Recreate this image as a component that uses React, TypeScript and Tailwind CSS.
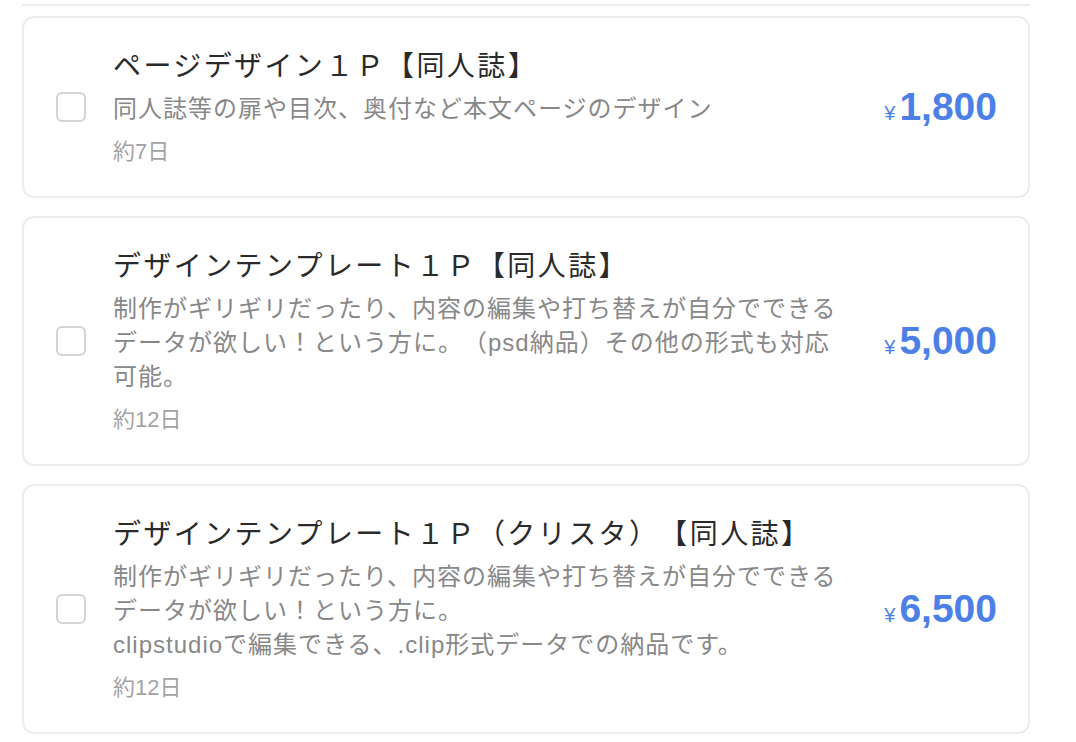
import React from 'react';

type Plan = {
  id: string;
  title: string;
  lines: string[];
  duration: string;
  price: string;
};

const plans: Plan[] = [
  {
    id: 'page',
    title: 'ページデザイン１Ｐ【同人誌】',
    lines: ['同人誌等の扉や目次、奥付など本文ページのデザイン'],
    duration: '約7日',
    price: '1,800',
  },
  {
    id: 'template',
    title: 'デザインテンプレート１Ｐ【同人誌】',
    lines: [
      '制作がギリギリだったり、内容の編集や打ち替えが自分でできる',
      'データが欲しい！という方に。（psd納品）その他の形式も対応',
      '可能。',
    ],
    duration: '約12日',
    price: '5,000',
  },
  {
    id: 'clip',
    title: 'デザインテンプレート１Ｐ（クリスタ）【同人誌】',
    lines: [
      '制作がギリギリだったり、内容の編集や打ち替えが自分でできる',
      'データが欲しい！という方に。',
      'clipstudioで編集できる、.clip形式データでの納品です。',
    ],
    duration: '約12日',
    price: '6,500',
  },
];

const PlanCard: React.FC<{ plan: Plan }> = ({ plan }) => (
  <label className="flex items-center rounded-[12px] border-2 border-[#ececec] bg-white pl-[32px] pr-[31px] py-[29px] cursor-pointer">
    <span className="flex-shrink-0 w-[30px] h-[30px] rounded-[6px] border-2 border-[#d4d4d6] bg-white" />
    <div className="ml-[27px] flex-grow">
      <p className="text-[28px] leading-[40px] tracking-[2.4px] text-[#2a2a2a]">{plan.title}</p>
      <div className="mt-[5px] text-[24px] leading-[34px] tracking-[1px] text-[#888888]">
        {plan.lines.map((line) => (
          <p key={line}>{line}</p>
        ))}
      </div>
      <p className="mt-[11px] text-[22px] leading-[30px] text-[#a3a3a3]">{plan.duration}</p>
    </div>
    <div className="ml-4 flex-shrink-0 flex items-baseline text-[#4c80e6] font-['Liberation_Sans',sans-serif]">
      <span className="text-[20px] mr-[4px]">¥</span>
      <span className="text-[39px] font-bold">{plan.price}</span>
    </div>
  </label>
);

const App: React.FC = () => {
  return (
    <div className="min-h-screen bg-white pt-[4px] pl-[22px] [text-spacing-trim:space-all] font-['Liberation_Sans','Noto_Sans_CJK_JP',sans-serif]">
      <div className="w-[1008px]">
        <div className="h-[2px] bg-[#ececec]" />
        <div className="mt-[10px] flex flex-col gap-[18px]">
          {plans.map((plan) => (
            <PlanCard key={plan.id} plan={plan} />
          ))}
        </div>
      </div>
    </div>
  );
};

export default App;
